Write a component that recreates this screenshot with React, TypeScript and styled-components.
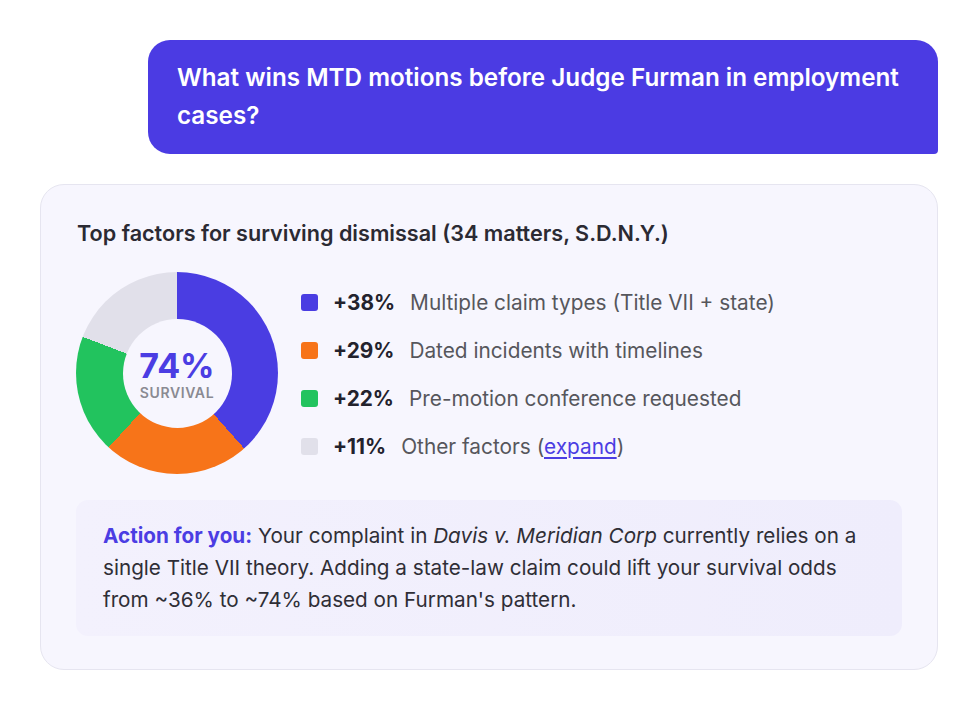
import React from "react";
import styled, { createGlobalStyle } from "styled-components";

const Global = createGlobalStyle`
  html, body { margin: 0; padding: 0; background: #ffffff; }
  body { font-family: Inter, "Noto Sans", Arial, sans-serif; -webkit-font-smoothing: antialiased; }
`;

const Page = styled.div`
  display: flex;
  flex-direction: column;
  padding: 40px 41px 40px 40px;
  gap: 30px;
`;

const Bubble = styled.div`
  align-self: flex-end;
  width: 790px;
  box-sizing: border-box;
  background: #4b3be3;
  color: #ffffff;
  border-radius: 22px 22px 4px 22px;
  padding: 19px 29px;
  font-size: 24.25px;
  font-weight: 600;
  line-height: 38px;
`;

const Card = styled.div`
  box-sizing: border-box;
  width: 898px;
  background: #f7f6fe;
  border: 1px solid #e6e5f0;
  border-radius: 24px;
  padding: 34px 35px 33px 35px;
  display: flex;
  flex-direction: column;
`;

const Title = styled.div`
  font-size: 21.6px;
  font-weight: 600;
  line-height: 28px;
  color: #2b2a33;
  padding-left: 1px;
`;

const ChartRow = styled.div`
  display: flex;
  align-items: center;
  gap: 23px;
  margin-top: 25px;
`;

const Donut = styled.div`
  position: relative;
  width: 202px;
  height: 202px;
  border-radius: 50%;
  background: conic-gradient(
    #4a3de2 0deg 138.3deg,
    #f77419 138.3deg 222.6deg,
    #22c35e 222.6deg 291deg,
    #e1e0ea 291deg 360deg
  );
  display: flex;
  align-items: center;
  justify-content: center;
  flex-shrink: 0;
`;

const DonutHole = styled.div`
  width: 109px;
  height: 109px;
  border-radius: 50%;
  background: #f7f6fe;
  display: flex;
  flex-direction: column;
  align-items: center;
  justify-content: center;
`;

const BigValue = styled.div`
  font-size: 34px;
  font-weight: 700;
  line-height: 36px;
  color: #4b3de3;
  margin-top: 2px;
`;

const SmallLabel = styled.div`
  font-size: 14px;
  font-weight: 600;
  color: #8a8a92;
  letter-spacing: 0.6px;
  line-height: 17px;
`;

const Legend = styled.div`
  display: flex;
  flex-direction: column;
  gap: 20px;
  padding-top: 3px;
`;

const LegendRow = styled.div`
  display: flex;
  align-items: center;
  height: 28px;
  font-size: 20.8px;
  line-height: 28px;
`;

const Swatch = styled.span<{ $color: string }>`
  width: 17px;
  height: 17px;
  border-radius: 3px;
  background: ${(p) => p.$color};
  margin-right: 15px;
  flex-shrink: 0;
`;

const Value = styled.span`
  font-weight: 700;
  color: #23222d;
  margin-right: 15px;
`;

const Label = styled.span`
  color: #56565c;
`;

const Link = styled.a`
  color: #4b3de3;
  text-decoration: underline;
  text-underline-offset: 3px;
`;

const ActionBox = styled.div`
  margin-top: 26px;
  background: linear-gradient(90deg, #f3f1fd 0%, #efedfc 100%);
  border-radius: 12px;
  padding: 20px 27px;
  font-size: 20.7px;
  line-height: 32px;
  color: #2f2e36;
`;

const ActionLead = styled.span`
  font-weight: 700;
  color: #4b3de3;
`;

const factors = [
  { color: "#4a3de2", value: "+38%", label: "Multiple claim types (Title VII + state)" },
  { color: "#f77419", value: "+29%", label: "Dated incidents with timelines" },
  { color: "#22c35e", value: "+22%", label: "Pre-motion conference requested" },
];

export default function App() {
  return (
    <>
      <Global />
      <Page>
        <Bubble>What wins MTD motions before Judge Furman in employment cases?</Bubble>
        <Card>
          <Title>Top factors for surviving dismissal (34 matters, S.D.N.Y.)</Title>
          <ChartRow>
            <Donut>
              <DonutHole>
                <BigValue>74%</BigValue>
                <SmallLabel>SURVIVAL</SmallLabel>
              </DonutHole>
            </Donut>
            <Legend>
              {factors.map((f) => (
                <LegendRow key={f.value}>
                  <Swatch $color={f.color} />
                  <Value>{f.value}</Value>
                  <Label>{f.label}</Label>
                </LegendRow>
              ))}
              <LegendRow>
                <Swatch $color="#e1e0ea" />
                <Value>+11%</Value>
                <Label>
                  Other factors (<Link href="#">expand</Link>)
                </Label>
              </LegendRow>
            </Legend>
          </ChartRow>
          <ActionBox>
            <ActionLead>Action for you:</ActionLead> Your complaint in <em>Davis v. Meridian Corp</em> currently relies on a single Title VII theory. Adding a state-law claim could lift your survival odds from ~36% to ~74% based on Furman's pattern.
          </ActionBox>
        </Card>
      </Page>
    </>
  );
}
